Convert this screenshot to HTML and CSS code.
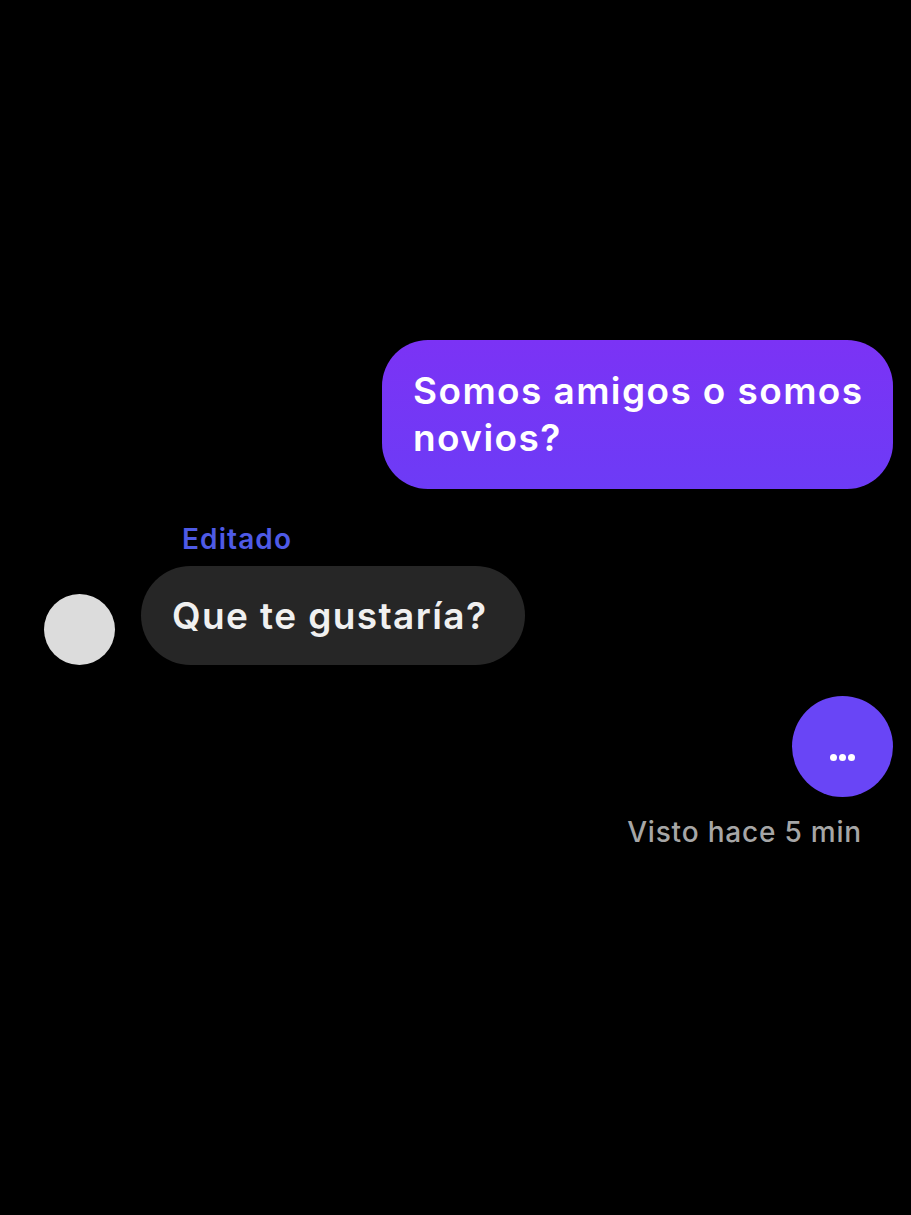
FILE: index.html
```html
<!DOCTYPE html>
<html lang="es">
<head>
    <meta charset="UTF-8">
    <meta name="viewport" content="width=device-width, initial-scale=1.0">
    <title>Chat</title>
    <link rel="stylesheet" href="styles.css">
</head>
<body>
    <div class="chat">
        <div class="msg-out">
            <div class="bubble bubble-out">Somos amigos o somos novios?</div>
        </div>

        <div class="msg-in">
            <div class="edited">Editado</div>
            <div class="msg-in-row">
                <div class="avatar"></div>
                <div class="bubble bubble-in">Que te gustaría?</div>
            </div>
        </div>

        <div class="msg-out">
            <div class="typing">
                <span class="dot"></span>
                <span class="dot"></span>
                <span class="dot"></span>
            </div>
        </div>

        <div class="seen">Visto hace 5 min</div>
    </div>
</body>
</html>
```

FILE: styles.css
```css
body {
    margin: 0;
    background-color: #000;
    font-family: Inter, "Noto Sans", sans-serif;
    color: #fff;
}

.chat {
    display: flex;
    flex-direction: column;
    padding: 340px 18px 0 44px;
    min-height: 875px;
}

.msg-out {
    display: flex;
    justify-content: flex-end;
}

.bubble {
    font-weight: 600;
    font-size: 37px;
    line-height: 47px;
    letter-spacing: 1.4px;
}

.bubble-out {
    width: 460px;
    padding: 27px 20px 28px 31px;
    border-radius: 46px;
    background: linear-gradient(180deg, #7b33f5 0%, #6d3bf6 100%);
}

.msg-in {
    display: flex;
    flex-direction: column;
    margin-top: 33px;
}

.edited {
    margin-left: 138px;
    margin-bottom: 10px;
    font-size: 28px;
    font-weight: 600;
    letter-spacing: 1.1px;
    color: #4e5ae6;
}

.msg-in-row {
    display: flex;
    align-items: flex-end;
    gap: 26px;
}

.avatar {
    width: 71px;
    height: 71px;
    border-radius: 50%;
    background-color: #dcdcdc;
}

.bubble-in {
    padding: 26px 38px 26px 31px;
    border-radius: 50px;
    background-color: #262626;
    color: #f0f0f0;
}

.msg-out .typing {
    margin-top: 31px;
}

.typing {
    width: 101px;
    height: 101px;
    border-radius: 50%;
    background-color: #6945f6;
    display: flex;
    align-items: center;
    justify-content: center;
    gap: 2px;
    padding-top: 22px;
    box-sizing: border-box;
}

.dot {
    width: 7px;
    height: 7px;
    border-radius: 50%;
    background-color: #fff;
}

.seen {
    align-self: flex-end;
    margin-right: 31px;
    margin-top: 18px;
    font-size: 28px;
    font-weight: 500;
    letter-spacing: 0.8px;
    color: #a6a6a6;
}
```
